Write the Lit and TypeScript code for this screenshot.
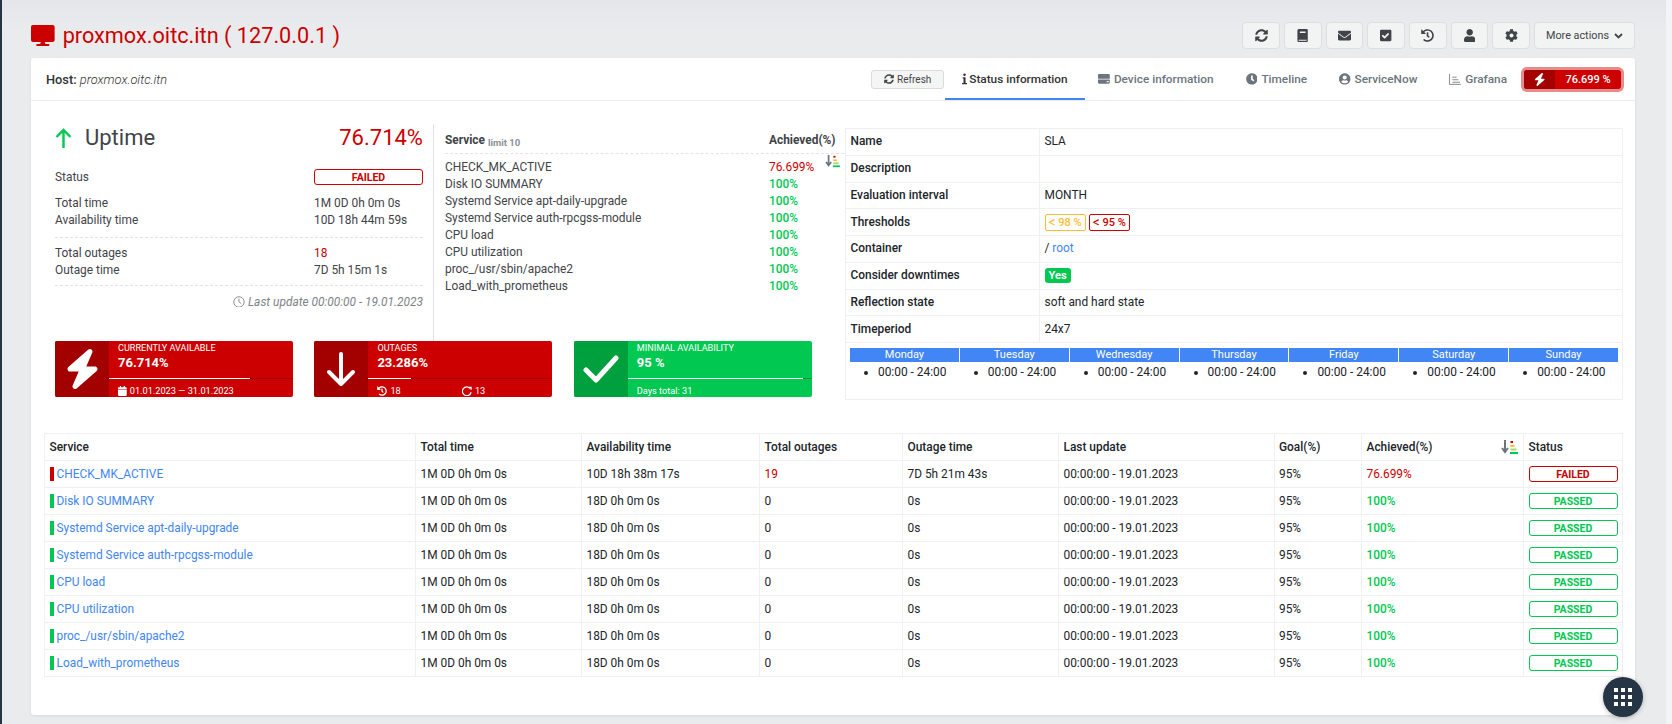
import { LitElement, html, css, svg } from 'lit';
import { customElement } from 'lit/decorators.js';

const icons: Record<string, { box: string; d: string }> = {
  desktop: { box: '0 0 576 512', d: 'M528 0H48C21.5 0 0 21.5 0 48v320c0 26.5 21.5 48 48 48h192l-16 48h-72c-13.3 0-24 10.7-24 24s10.7 24 24 24h272c13.3 0 24-10.7 24-24s-10.7-24-24-24h-72l-16-48h192c26.5 0 48-21.5 48-48V48c0-26.5-21.5-48-48-48z' },
  sync: { box: '0 0 512 512', d: 'M370.72 133.28C339.458 104.008 298.888 87.962 255.848 88c-77.458.068-144.328 53.178-162.791 126.85-1.344 5.363-6.122 9.15-11.651 9.15H24.103c-7.498 0-13.194-6.807-11.807-14.176C33.933 94.924 134.813 8 256 8c66.448 0 126.791 26.136 171.315 68.685L463.03 40.97C478.149 25.851 504 36.559 504 57.941V192c0 13.255-10.745 24-24 24H345.941c-21.382 0-32.09-25.851-16.971-40.971l41.75-41.749zM32 296h134.059c21.382 0 32.09 25.851 16.971 40.971l-41.75 41.75c31.262 29.273 71.835 45.319 114.876 45.28 77.418-.07 144.315-53.144 162.787-126.849 1.344-5.363 6.122-9.15 11.651-9.15h57.304c7.498 0 13.194 6.807 11.807 14.176C478.067 417.076 377.187 504 256 504c-66.448 0-126.791-26.136-171.315-68.685L48.97 471.03C33.851 486.149 8 475.441 8 454.059V320c0-13.255 10.745-24 24-24z' },
  book: { box: '0 0 448 512', d: 'M80 0h304c24 0 40 16 40 40v432c0 24-16 40-40 40H80c-40 0-64-24-64-64V64C16 24 40 0 80 0zm32 96v64h224V96H112zM64 424v24c0 10 6 16 16 16h296v-40H64z' },
  envelope: { box: '0 0 512 512', d: 'M502.3 190.8c3.9-3.1 9.7-.2 9.7 4.7V400c0 26.5-21.5 48-48 48H48c-26.5 0-48-21.5-48-48V195.6c0-5 5.7-7.8 9.7-4.7 22.4 17.4 52.1 39.5 154.1 113.6 21.1 15.4 56.7 47.8 92.2 47.6 35.7.3 72-32.8 92.3-47.6 102-74.1 131.6-96.3 154-113.7zM256 320c23.2.4 56.6-29.2 73.4-41.4 132.7-96.3 142.8-104.7 173.4-128.7 5.8-4.5 9.2-11.5 9.2-18.9v-19c0-26.5-21.5-48-48-48H48C21.5 64 0 85.5 0 112v19c0 7.4 3.4 14.3 9.2 18.9 30.6 23.9 40.7 32.4 173.4 128.7 16.8 12.2 50.2 41.8 73.4 41.4z' },
  checkSquare: { box: '0 0 448 512', d: 'M400 480H48c-26.5 0-48-21.500-48-48V80c0-26.500 21.500-48 48-48h352c26.500 0 48 21.500 48 48v352c0 26.500-21.500 48-48 48zM195 370l155-155c8-8 8-20 0-28l-20-20c-8-8-20-8-28 0L181 288l-55-55c-8-8-20-8-28 0l-20 20c-8 8-8 20 0 28l89 89c8 8 20 8 28 0z' },
  history: { box: '0 0 512 512', d: 'M504 255.531c.253 136.64-111.18 248.372-247.82 248.468-59.015.042-113.223-20.53-155.822-54.911-11.077-8.94-11.905-25.541-1.839-35.607l11.267-11.267c8.609-8.609 22.353-9.551 31.891-1.984C173.062 425.135 212.781 440 256 440c101.705 0 184-82.311 184-184 0-101.705-82.311-184-184-184-48.814 0-93.149 18.969-126.068 49.932l50.754 50.754c10.08 10.08 2.941 27.314-11.313 27.314H24c-8.837 0-16-7.163-16-16V38.627c0-14.254 17.234-21.393 27.314-11.314l49.372 49.372C129.209 34.136 189.552 8 256 8c136.81 0 247.747 110.78 248 247.531zm-180.912 78.784l9.823-12.63c8.138-10.463 6.253-25.542-4.21-33.679L288 256.349V152c0-13.255-10.745-24-24-24h-16c-13.255 0-24 10.745-24 24v135.651l65.409 50.874c10.463 8.137 25.541 6.253 33.679-4.21z' },
  user: { box: '0 0 448 512', d: 'M224 256c70.7 0 128-57.3 128-128S294.7 0 224 0 96 57.3 96 128s57.3 128 128 128zm89.6 32h-16.7c-22.2 10.2-46.9 16-72.9 16s-50.6-5.8-72.9-16h-16.7C60.2 288 0 348.2 0 422.4V464c0 26.5 21.5 48 48 48h352c26.5 0 48-21.5 48-48v-41.6c0-74.2-60.2-134.4-134.4-134.4z' },
  cog: { box: '0 0 512 512', d: 'M487.4 315.7l-42.6-24.6c4.3-23.2 4.3-47 0-70.2l42.6-24.6c4.9-2.8 7.1-8.6 5.5-14-11.1-35.6-30-67.8-54.7-94.6-3.8-4.1-10-5.1-14.8-2.3L380.8 110c-17.9-15.4-38.5-27.3-60.8-35.1V25.8c0-5.6-3.9-10.5-9.4-11.7-36.7-8.2-74.3-7.8-109.2 0-5.5 1.2-9.4 6.1-9.4 11.7V75c-22.2 7.9-42.8 19.8-60.8 35.1L88.7 85.5c-4.9-2.8-11-1.9-14.8 2.3-24.7 26.7-43.6 58.9-54.7 94.6-1.7 5.4.6 11.2 5.5 14L67.3 221c-4.3 23.2-4.3 47 0 70.2l-42.6 24.6c-4.9 2.8-7.1 8.6-5.5 14 11.1 35.6 30 67.8 54.7 94.6 3.8 4.1 10 5.1 14.8 2.3l42.6-24.6c17.9 15.4 38.5 27.3 60.8 35.1v49.2c0 5.6 3.9 10.5 9.4 11.7 36.7 8.2 74.3 7.8 109.2 0 5.5-1.2 9.4-6.1 9.4-11.7v-49.2c22.2-7.9 42.8-19.8 60.8-35.1l42.6 24.6c4.9 2.8 11 1.9 14.8-2.3 24.7-26.7 43.6-58.9 54.7-94.6 1.5-5.5-.7-11.3-5.6-14.1zM256 336c-44.1 0-80-35.9-80-80s35.9-80 80-80 80 35.9 80 80-35.9 80-80 80z' },
  bolt: { box: '0 0 448 512', d: 'M349.4 44.6c5.9-13.7 1.5-29.7-10.6-38.5s-28.6-8-39.9 1.8l-256 224c-10 8.8-13.6 22.9-8.9 35.3S50.7 288 64 288H175.5L98.6 467.4c-5.9 13.7-1.5 29.7 10.6 38.5s28.6 8 39.9-1.8l256-224c10-8.8 13.6-22.9 8.9-35.3s-16.6-20.7-30-20.7H272.5L349.4 44.6z' },
  server: { box: '0 0 512 512', d: 'M48 48h416c26 0 48 22 48 48v128c0 13-11 24-24 24H24c-13 0-24-11-24-24V96c0-26 22-48 48-48zM24 280h464c13 0 24 11 24 24v112c0 26-22 48-48 48H48c-26 0-48-22-48-48V304c0-13 11-24 24-24zm352 64v56h88v-56h-88z' },
  clock: { box: '0 0 512 512', d: 'M256 8C119 8 8 119 8 256s111 248 248 248 248-111 248-248S393 8 256 8zm57.100 350.100L224.900 294c-3.100-2.300-4.900-5.900-4.900-9.700V116c0-6.600 5.400-12 12-12h48c6.600 0 12 5.400 12 12v137.700l63.500 46.200c5.400 3.900 6.500 11.400 2.600 16.800l-28.200 38.800c-3.900 5.300-11.400 6.500-16.800 2.600z' },
  userCircle: { box: '0 0 496 512', d: 'M248 8C111 8 0 119 0 256s111 248 248 248 248-111 248-248S385 8 248 8zm0 96c48.600 0 88 39.400 88 88s-39.400 88-88 88-88-39.400-88-88 39.400-88 88-88zm0 344c-58.700 0-111.300-26.600-146.500-68.200 18.800-35.400 55.600-59.800 98.500-59.800 2.400 0 4.800.4 7.100 1.100 13 4.200 26.600 6.900 40.900 6.900 14.300 0 28-2.700 40.900-6.900 2.300-.7 4.700-1.100 7.100-1.100 42.900 0 79.700 24.400 98.500 59.800C359.300 421.400 306.700 448 248 448z' },
  calendar: { box: '0 0 448 512', d: 'M0 464c0 26.500 21.500 48 48 48h352c26.500 0 48-21.500 48-48V192H0v272zM448 112c0-26.500-21.500-48-48-48h-48V16c0-8.800-7.200-16-16-16h-32c-8.800 0-16 7.200-16 16v48H160V16c0-8.800-7.200-16-16-16h-32c-8.800 0-16 7.200-16 16v48H48C21.500 64 0 85.500 0 112v48h448v-48z' },
};

const icon = (name: string, cls = '') => html`<svg class="ic ${cls}" viewBox=${icons[name].box} fill="currentColor">${svg`<path d=${icons[name].d}></path>`}</svg>`;

const sortIcon = html`<svg class="sort" viewBox="0 0 17 15">
  <path d="M4 0v11M1 8l3 4 3-4" fill="none" stroke="#6c757d" stroke-width="2"></path>
  <rect x="9.500" y="1" width="2.500" height="2" fill="#cc0000"></rect>
  <rect x="9.500" y="5" width="4" height="2" fill="#ffbb33"></rect>
  <rect x="9.500" y="8.500" width="6" height="2" fill="#a8d86a"></rect>
  <rect x="9" y="12" width="8" height="2" fill="#00c851"></rect>
</svg>`;

interface Service { name: string; avail: string; outages: string; outTime: string; achieved: string; failed: boolean; }

const services: Service[] = [
  { name: 'CHECK_MK_ACTIVE', avail: '10D 18h 38m 17s', outages: '19', outTime: '7D 5h 21m 43s', achieved: '76.699', failed: true },
  { name: 'Disk IO SUMMARY', avail: '18D 0h 0m 0s', outages: '0', outTime: '0s', achieved: '100', failed: false },
  { name: 'Systemd Service apt-daily-upgrade', avail: '18D 0h 0m 0s', outages: '0', outTime: '0s', achieved: '100', failed: false },
  { name: 'Systemd Service auth-rpcgss-module', avail: '18D 0h 0m 0s', outages: '0', outTime: '0s', achieved: '100', failed: false },
  { name: 'CPU load', avail: '18D 0h 0m 0s', outages: '0', outTime: '0s', achieved: '100', failed: false },
  { name: 'CPU utilization', avail: '18D 0h 0m 0s', outages: '0', outTime: '0s', achieved: '100', failed: false },
  { name: 'proc_/usr/sbin/apache2', avail: '18D 0h 0m 0s', outages: '0', outTime: '0s', achieved: '100', failed: false },
  { name: 'Load_with_prometheus', avail: '18D 0h 0m 0s', outages: '0', outTime: '0s', achieved: '100', failed: false },
];

const days = ['Monday', 'Tuesday', 'Wednesday', 'Thursday', 'Friday', 'Saturday', 'Sunday'];

@customElement('app-root')
export class AppRoot extends LitElement {
  static styles = css`
    :host {
      display: block;
      width: 1672px;
      height: 724px;
      overflow: hidden;
      position: relative;
      box-sizing: border-box;
      border-left: 2px solid #253545;
      background: linear-gradient(#e4e6e9, #eaebed 30px, #e9ebed);
      font-family: Roboto, "Liberation Sans", sans-serif;
      font-size: 11.900px;
      line-height: 17px;
      color: #212529;
    }
    * { box-sizing: border-box; }
    .ic { display: inline-block; height: 1em; width: auto; vertical-align: -0.125em; }
    .edge { position: absolute; top: 0; right: 0; bottom: 0; width: 6px; background: #f3f4f5; }

    .page { padding: 22px 37px 0 29px; }
    .top { display: flex; justify-content: space-between; align-items: center; height: 27px; }
    .title { display: flex; align-items: center; gap: 8px; color: #cc0000; font-size: 21.700px; margin: 0; font-weight: 400; line-height: 27px; }
    .title .ic { height: 21px; }
    .actions { display: flex; gap: 4px; }
    .btn { width: 37.700px; height: 27px; display: flex; align-items: center; justify-content: center; background: #f2f3f3; border: 1px solid #dcdee0; border-radius: 4px; color: #3f4448; font-size: 13px; }
    .btn.more { width: 101px; font-size: 10.800px; gap: 5px; }
    .chev { width: 9px; height: 6px; fill: none; stroke: currentColor; stroke-width: 1.800; }

    .card { margin-top: 9px; height: 657px; background: #fff; border-radius: 3px; box-shadow: 0 1px 3px rgba(0, 0, 0, .08); }
    .card-head { height: 43px; display: flex; justify-content: space-between; align-items: center; padding: 0 12px 0 15px; border-bottom: 1px solid #e9ecef; }
    .host { font-size: 12.800px; color: #333; }
    .host b { font-weight: 500; }
    .host i { font-weight: 300; }
    .tabs { display: flex; align-items: center; height: 42px; }
    .refresh { width: 73px; height: 19px; display: flex; align-items: center; justify-content: center; gap: 3px; background: #f4f5f5; border: 1px solid #d9dbdd; border-radius: 3px; font-size: 10px; color: #444; margin-right: 1px; }
    .tab { height: 42px; padding: 0 16px; display: flex; align-items: center; gap: 4px; font-weight: 500; font-size: 11.800px; color: #6c757d; }
    .tab.active { color: #333; border-bottom: 2px solid #4285f4; padding: 2px 17px 0; gap: 2px; margin-right: -2.500px; }
    .pill { width: 97px; height: 19px; margin: 0 2px 0 1px; display: flex; border-radius: 3px; overflow: hidden; background: #cc0000; color: #fff; font-size: 11px; font-weight: 500; box-shadow: 0 0 0 3px #e78a8a; }
    .pill-ic { width: 31px; background: #a30000; display: flex; align-items: center; justify-content: center; font-size: 13px; }
    .pill-val { flex: 1; display: flex; align-items: center; justify-content: center; }

    .overview { display: flex; padding: 23px 0 0 24px; }
    .overview-left { width: 789px; }
    .top-row { display: flex; height: 217px; }

    .uptime { width: 378px; padding-right: 10px; color: #3f4448; }
    .uptime-head { display: flex; align-items: center; justify-content: space-between; height: 27px; margin-bottom: 17px; font-size: 22px; color: #cc0000; }
    .uptime-name { display: flex; align-items: center; gap: 13px; color: #3f4448; }
    .arrow { width: 17px; height: 20px; fill: none; stroke: #00c851; stroke-width: 2.400; }
    .kv { display: grid; grid-template-columns: 259px 1fr; }
    .status-row { align-items: center; height: 18px; margin-bottom: 9px; }
    .badge { display: flex; align-items: center; justify-content: center; height: 16px; border: 1px solid; border-radius: 3px; font-size: 10.500px; font-weight: 700; }
    .badge.failed { color: #cc0000; border-color: #cc0000; }
    .badge.passed { color: #00c851; border-color: #00c851; }
    .group { padding-bottom: 8px; border-bottom: 1px dashed #e2e4e6; margin-bottom: 7px; }
    .group.last { padding-bottom: 6px; margin-bottom: 8px; }
    .red { color: #cc0000; }
    .green { color: #00c851; font-weight: 500; }
    .updated { text-align: right; font-style: italic; color: #7d8388; }

    .top-services { flex: 1; position: relative; border-left: 1px solid #dee2e6; padding-left: 11px; color: #3f4448; }
    .ts-head { display: grid; grid-template-columns: 324px 1fr; padding-top: 8px; height: 30px; border-bottom: 1px dashed #e2e4e6; font-weight: 700; color: #3f4448; }
    .ts-head small { font-size: 9.500px; color: #8a9095; font-weight: 700; vertical-align: -2px; }
    .ts-rows { padding-top: 5px; }
    .ts-row { display: grid; grid-template-columns: 324px 1fr; }
    .top-services .sort { position: absolute; left: 391px; top: 31px; width: 15px; height: 13px; }

    .widgets { display: flex; gap: 21.400px; }
    .widget { width: 238px; height: 56px; display: flex; border-radius: 2px; overflow: hidden; color: #fff; background: #cc0000; }
    .widget.ok { background: #00c851; }
    .w-icon { flex: none; width: 54px; display: flex; align-items: center; justify-content: center; background: #a30000; font-size: 40px; }
    .ok .w-icon { background: #00a03f; }
    .w-body { flex: 1; min-width: 0; display: flex; flex-direction: column; }
    .w-title { padding: 0 9px; font-size: 9.100px; line-height: 14px; }
    .w-value { padding: 0 9px; font-size: 13px; font-weight: 700; line-height: 18px; margin-top: -1px; }
    .w-track { height: 1px; margin-top: 6px; background: rgba(0, 0, 0, .25); flex: none; }
    .w-bar { height: 100%; background: #fff; }
    .w-foot { padding: 3px 9px 0; flex: 1; display: flex; align-items: center; gap: 3px; font-size: 9.200px; }
    .w-foot .ic { font-size: 10px; }
    .w-cell { width: 85px; display: flex; align-items: center; gap: 3px; }

    .sla { width: 778px; margin: 4px 0 0 1px; border-collapse: collapse; table-layout: fixed; align-self: flex-start; }
    .sla td { border: 1px solid #eef0f1; padding: 0 4.500px; height: 26.750px; }
    .sla td:first-child { width: 194px; font-weight: 500; }
    .sla td.tp-cell { vertical-align: top; height: 57px; padding: 5px 4px 0; font-weight: 400; }
    .link { color: #4285f4; }
    .thr { display: inline-block; border: 1px solid; border-radius: 2px; padding: 0 3px; font-size: 11px; font-weight: 500; line-height: 14px; margin-right: 3px; }
    .thr span { font-size: 14px; line-height: 14px; font-weight: 400; vertical-align: -1px; }
    .thr.warn { color: #ffbb33; border-color: #ffbb33; }
    .thr.crit { color: #cc0000; border-color: #cc0000; }
    .yes { display: inline-block; background: #00c851; color: #fff; border-radius: 3px; padding: 0 4px; font-size: 11px; font-weight: 700; line-height: 15px; }
    .days { display: grid; grid-template-columns: repeat(7, 1fr); gap: 0 1px; }
    .day-name { background: #4285f4; color: #fff; text-align: center; font-size: 11px; line-height: 14px; }
    .days ul { margin: 2px 0 0; padding: 0 0 0 28px; }

    .services { width: 1578px; margin: 33px 0 0 13px; border-collapse: collapse; table-layout: fixed; }
    .services th, .services td { border: 1px solid #eef0f1; padding: 0 4.500px; height: 27px; text-align: left; }
    .services th { font-weight: 500; }
    .svc { display: flex; align-items: center; gap: 3px; }
    .mark { width: 4px; height: 14px; background: #00c851; }
    .mark.bad { background: #cc0000; }
    .head-sort { display: flex; justify-content: space-between; align-items: center; padding-right: 1px; }
    .head-sort .sort { width: 17px; height: 15px; }

    .fab { position: absolute; left: 1601px; top: 677px; width: 40px; height: 40px; border-radius: 50%; background: #253545; box-shadow: 0 1px 5px rgba(0, 0, 0, .25); display: grid; grid-template-columns: repeat(3, 4px); gap: 3px; place-content: center; }
    .fab span { width: 4px; height: 4px; background: #fff; }
  `;

  private renderWidget(cls: string, ic: unknown, title: string, value: string, pct: number, foot: unknown) {
    return html`<div class="widget ${cls}">
      <div class="w-icon">${ic}</div>
      <div class="w-body">
        <div class="w-title">${title}</div>
        <div class="w-value">${value}</div>
        <div class="w-track"><div class="w-bar" style="width:${pct}%"></div></div>
        <div class="w-foot">${foot}</div>
      </div>
    </div>`;
  }

  private renderOverview() {
    return html`<section class="overview">
      <div class="overview-left">
        <div class="top-row">
          <div class="uptime">
            <div class="uptime-head">
              <span class="uptime-name">
                <svg class="arrow" viewBox="0 0 17 20"><path d="M8.500 20V2M1.500 9l7-7 7 7"></path></svg>
                Uptime
              </span>
              <span>76.714%</span>
            </div>
            <div class="kv status-row"><span>Status</span><span class="badge failed">FAILED</span></div>
            <div class="group">
              <div class="kv"><span>Total time</span><span>1M 0D 0h 0m 0s</span></div>
              <div class="kv"><span>Availability time</span><span>10D 18h 44m 59s</span></div>
            </div>
            <div class="group last">
              <div class="kv"><span>Total outages</span><span class="red">18</span></div>
              <div class="kv"><span>Outage time</span><span>7D 5h 15m 1s</span></div>
            </div>
            <div class="updated">
              <svg class="ic" viewBox="0 0 16 16" fill="none" stroke="currentColor" stroke-width="1.200"><circle cx="8" cy="8" r="7"></circle><path d="M8 3.500V8l3 2"></path></svg>
              Last update 00:00:00 - 19.01.2023
            </div>
          </div>
          <div class="top-services">
            <div class="ts-head"><span>Service <small>limit 10</small></span><span>Achieved(%)</span></div>
            <div class="ts-rows">
              ${services.map((s) => html`<div class="ts-row"><span>${s.name}</span><span class=${s.failed ? 'red' : 'green'}>${s.achieved}%</span></div>`)}
            </div>
            ${sortIcon}
          </div>
        </div>
        <div class="widgets">
          ${this.renderWidget('', icon('bolt'), 'CURRENTLY AVAILABLE', '76.714%', 76.7, html`${icon('calendar')} 01.01.2023 — 31.01.2023`)}
          ${this.renderWidget('', html`<svg width="30" height="36" viewBox="0 0 30 36" fill="none" stroke="#fff" stroke-width="4" stroke-linecap="round" stroke-linejoin="round"><path d="M15 3v30M3 21l12 12 12-12"></path></svg>`, 'OUTAGES', '23.286%', 23.3, html`
            <span class="w-cell">${icon('history')} 18</span>
            <span class="w-cell"><svg class="ic" viewBox="0 0 16 16" fill="none" stroke="currentColor" stroke-width="2"><path d="M13 4a7 7 0 1 0 1.500 6M10 2h4.500v4"></path></svg> 13</span>`)}
          ${this.renderWidget('ok', html`<svg width="36" height="28" viewBox="0 0 36 28" fill="none" stroke="#fff" stroke-width="5" stroke-linecap="round" stroke-linejoin="round"><path d="M3 15l10 10L33 3"></path></svg>`, 'MINIMAL AVAILABILITY', '95 %', 95, html`Days total: 31`)}
        </div>
      </div>
      <table class="sla">
        <tr><td>Name</td><td>SLA</td></tr>
        <tr><td>Description</td><td></td></tr>
        <tr><td>Evaluation interval</td><td>MONTH</td></tr>
        <tr><td>Thresholds</td><td><span class="thr warn"><span>&lt;</span> 98 %</span><span class="thr crit"><span>&lt;</span> 95 %</span></td></tr>
        <tr><td>Container</td><td>/ <span class="link">root</span></td></tr>
        <tr><td>Consider downtimes</td><td><span class="yes">Yes</span></td></tr>
        <tr><td>Reflection state</td><td>soft and hard state</td></tr>
        <tr><td>Timeperiod</td><td>24x7</td></tr>
        <tr><td colspan="2" class="tp-cell"><div class="days">
          ${days.map((d) => html`<div><div class="day-name">${d}</div><ul><li>00:00 - 24:00</li></ul></div>`)}
        </div></td></tr>
      </table>
    </section>`;
  }

  private renderTable() {
    const widths = [371, 166, 178, 143, 156, 215.500, 87.500, 162, 99];
    return html`<table class="services">
      <colgroup>${widths.map((w) => html`<col style="width:${w}px" />`)}</colgroup>
      <tr>
        <th>Service</th><th>Total time</th><th>Availability time</th><th>Total outages</th><th>Outage time</th><th>Last update</th><th>Goal(%)</th>
        <th><div class="head-sort"><span>Achieved(%)</span>${sortIcon}</div></th>
        <th>Status</th>
      </tr>
      ${services.map((s) => html`<tr>
        <td><div class="svc"><span class="mark ${s.failed ? 'bad' : ''}"></span><span class="link">${s.name}</span></div></td>
        <td>1M 0D 0h 0m 0s</td>
        <td>${s.avail}</td>
        <td class=${s.failed ? 'red' : ''}>${s.outages}</td>
        <td>${s.outTime}</td>
        <td>00:00:00 - 19.01.2023</td>
        <td>95%</td>
        <td class=${s.failed ? 'red' : 'green'}>${s.achieved}%</td>
        <td><span class="badge ${s.failed ? 'failed' : 'passed'}">${s.failed ? 'FAILED' : 'PASSED'}</span></td>
      </tr>`)}
    </table>`;
  }

  render() {
    return html`
      <div class="edge"></div>
      <div class="page">
        <header class="top">
          <h1 class="title">${icon('desktop')} proxmox.oitc.itn ( 127.0.0.1 )</h1>
          <div class="actions">
            ${['sync', 'book', 'envelope', 'checkSquare', 'history', 'user', 'cog'].map((n) => html`<div class="btn">${icon(n)}</div>`)}
            <div class="btn more">More actions <svg class="chev" viewBox="0 0 9 6"><path d="M1 1l3.500 3.500L8 1"></path></svg></div>
          </div>
        </header>
        <div class="card">
          <div class="card-head">
            <div class="host"><b>Host:</b> <i>proxmox.oitc.itn</i></div>
            <nav class="tabs">
              <div class="refresh">${icon('sync')} Refresh</div>
              <div class="tab active"><svg class="ic" viewBox="0 0 6 14" fill="currentColor"><circle cx="3" cy="2" r="1.500"></circle><path d="M.8 5h3.400v7H6v1.500H0V12h1.800V6.500h-1z"></path></svg> Status information</div>
              <div class="tab">${icon('server')} Device information</div>
              <div class="tab">${icon('clock')} Timeline</div>
              <div class="tab">${icon('userCircle')} ServiceNow</div>
              <div class="tab"><svg class="ic" viewBox="0 0 14 14" fill="none" stroke="currentColor" stroke-width="1"><path d="M.5 1v12.500H14M4 5h5M4 8h7M4 11h9"></path></svg> Grafana</div>
              <div class="pill"><span class="pill-ic">${icon('bolt')}</span><span class="pill-val">76.699 %</span></div>
            </nav>
          </div>
          ${this.renderOverview()}
          ${this.renderTable()}
        </div>
      </div>
      <div class="fab">${Array.from({ length: 9 }, () => html`<span></span>`)}</div>
    `;
  }
}
